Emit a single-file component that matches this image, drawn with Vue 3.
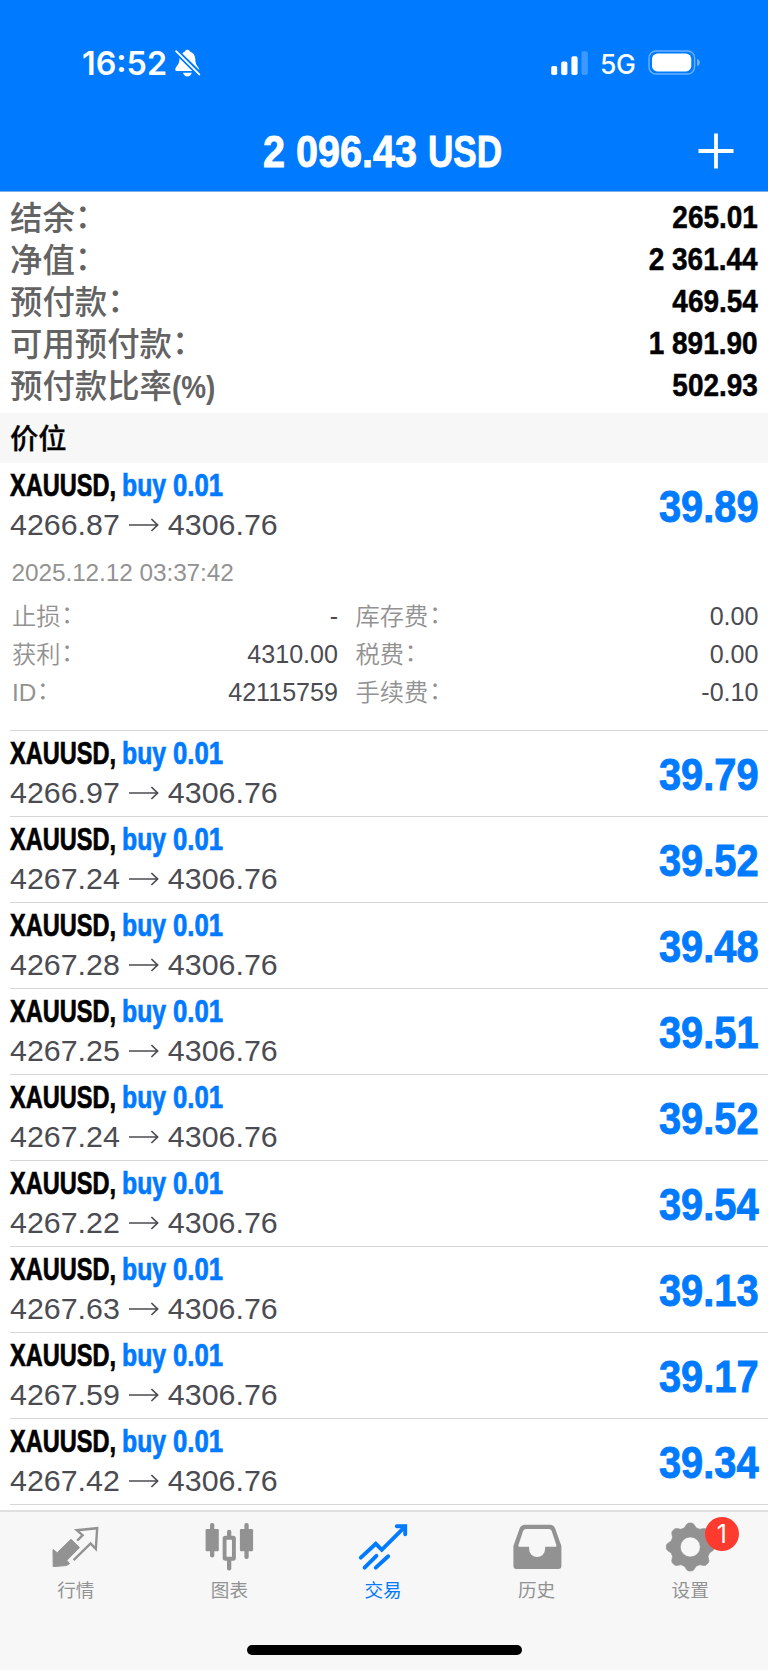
<script setup>
const account = [
  { label: '结余', colon: true, value: '265.01' },
  { label: '净值', colon: true, value: '2 361.44' },
  { label: '预付款', colon: true, value: '469.54' },
  { label: '可用预付款', colon: true, value: '1 891.90' },
  { label: '预付款比率', suffix: '(%)', value: '502.93' },
]

const positions = [
  { open: '4266.87', profit: '39.89', expanded: true },
  { open: '4266.97', profit: '39.79' },
  { open: '4267.24', profit: '39.52' },
  { open: '4267.28', profit: '39.48' },
  { open: '4267.25', profit: '39.51' },
  { open: '4267.24', profit: '39.52' },
  { open: '4267.22', profit: '39.54' },
  { open: '4267.63', profit: '39.13' },
  { open: '4267.59', profit: '39.17' },
  { open: '4267.42', profit: '39.34' },
]

const details = [
  ['止损', '-', '库存费', '0.00'],
  ['获利', '4310.00', '税费', '0.00'],
  ['ID', '42115759', '手续费', '-0.10'],
]

// Eight-toothed gear outline around (cx, cy)
function gear(cx, cy) {
  const profile = [[-17, 20.1], [-9, 23], [-4.5, 24], [4.5, 24], [9, 23], [17, 20.1]]
  const points = []
  for (let t = 0; t < 8; t++) {
    for (const [deg, r] of profile) {
      const a = ((t * 45 + deg) * Math.PI) / 180
      points.push(`${(cx + r * Math.sin(a)).toFixed(2)} ${(cy - r * Math.cos(a)).toFixed(2)}`)
    }
  }
  return `M${points.join('L')}ZM${cx - 10} ${cy}a10 10 0 1 0 20 0a10 10 0 1 0 -20 0Z`
}
const gearPath = gear(49.3, 27)
</script>

<template>
  <div class="screen">
    <header class="header">
      <div class="status">
        <span class="time">16:52</span>
        <svg class="bell" width="27" height="30" viewBox="0 0 27 30">
          <path fill="#fff" d="M8.2 4.6C9 3.6 10 3 11 2.6C11.2 1.2 12.1.8 13.4.8S15.6 1.2 15.9 2.6C19.4 3.8 21.1 6.4 21.3 10.2C21.5 14.6 22.2 15.8 24.2 18.2Q25.2 19.4 25.2 21.1Z" />
          <path fill="#fff" d="M5.7 8.6L19.1 22H3Q1.2 22 1.2 20.4Q1.2 19 2.7 17.3C4.7 15 5.3 13.4 5.5 9.6Z" />
          <path fill="#fff" d="M9 23.8H17.8Q16.7 27.4 13.4 27.4T9 23.8Z" />
          <path stroke="#007aff" stroke-width="5" d="M3 3.2L25 25.2" />
          <path stroke="#fff" stroke-width="1.9" stroke-linecap="round" d="M2.1 2.2L25.3 25.4" />
        </svg>
        <span class="grow"></span>
        <svg class="signal" width="38" height="24" viewBox="0 0 38 24" fill="#fff">
          <rect x=".2" y="15" width="6" height="9" rx="1.8" />
          <rect x="10.2" y="10.6" width="6.2" height="13.4" rx="1.8" />
          <rect x="20.4" y="5.3" width="6.2" height="18.7" rx="1.8" />
          <rect x="30.5" y=".2" width="6.3" height="23.8" rx="1.8" opacity=".24" />
        </svg>
        <span class="net">5G</span>
        <svg class="battery" width="53" height="26" viewBox="0 0 53 26">
          <rect x="1" y="1" width="45.6" height="23" rx="7" fill="none" stroke="#fff" stroke-opacity=".42" stroke-width="1.4" />
          <rect x="4" y="3.6" width="39.3" height="17.8" rx="5.4" fill="#fff" />
          <path d="M49.2 8.7Q51.8 9.8 51.8 12.4T49.2 16Z" fill="#fff" opacity=".48" />
        </svg>
      </div>
      <div class="titlebar">
        <h1 class="title"><span class="title-num">2 096.43</span><span class="title-cur">USD</span></h1>
        <svg class="plus" width="36" height="36" viewBox="0 0 36 36">
          <path stroke="#fff" stroke-width="3.8" d="M.5 18H35.5M18 .5V35.5" />
        </svg>
      </div>
    </header>

    <section class="account">
      <div v-for="a in account" :key="a.label" class="account-row">
        <span class="account-label">{{ a.label }}<span v-if="a.colon" class="colon">：</span><span v-if="a.suffix" class="pct">{{ a.suffix }}</span></span>
        <span class="account-value">{{ a.value }}</span>
      </div>
    </section>

    <h2 class="section">价位</h2>

    <main class="positions">
      <article v-for="(p, i) in positions" :key="i" class="position" :class="{ expanded: p.expanded }">
        <div class="row">
          <div class="info">
            <div class="symbol-line">
              <span class="symbol">XAUUSD,</span><span class="buy">buy</span><span class="volume">0.01</span>
            </div>
            <div class="prices">
              <span>{{ p.open }}</span>
              <svg class="arrow" width="30" height="14" viewBox="0 0 30 14">
                <path d="M0 7H28.6M22.4 1L28.6 7L22.4 13" fill="none" stroke="#4b4b52" stroke-width="1.7" />
              </svg>
              <span>4306.76</span>
            </div>
          </div>
          <span class="profit">{{ p.profit }}</span>
        </div>
        <div v-if="p.expanded" class="details">
          <div class="date">2025.12.12 03:37:42</div>
          <div v-for="d in details" :key="d[0]" class="detail-row">
            <span class="dim">{{ d[0] }}<span class="colon">：</span></span>
            <span class="val">{{ d[1] }}</span>
            <span class="dim">{{ d[2] }}<span class="colon">：</span></span>
            <span class="val">{{ d[3] }}</span>
          </div>
        </div>
      </article>
    </main>

    <nav class="tabs">
      <a class="tab">
        <svg class="icon" width="100" height="54" viewBox="26.8 1520 100 54">
          <path fill="#929292" stroke="#929292" stroke-linejoin="round" d="M52.8 1549.5L57 1552.7L70.8 1539.3L79.3 1547.6L66.7 1560.3L69.3 1563.8L66 1565.6L53 1566.6Z" />
          <path fill="none" stroke="#929292" stroke-width="2.4" d="M77 1540.6L82.4 1535.2L76.6 1530.2L97 1528.2L95.6 1549L90.4 1543.4L73.4 1560.2" />
        </svg>
        <span class="tab-label">行情</span>
      </a>
      <a class="tab">
        <svg class="icon" width="100" height="54" viewBox="180.4 1520 100 54" fill="#929292">
          <rect x="206" y="1529" width="13.2" height="22.3" rx="1.2" />
          <rect x="210.4" y="1523" width="4.3" height="34.6" rx="2" />
          <rect x="240.3" y="1529" width="13.2" height="22.3" rx="1.2" />
          <rect x="244.8" y="1523" width="4.3" height="36" rx="2" />
          <rect x="227.4" y="1529.7" width="4.3" height="8" rx="2" />
          <rect x="227.4" y="1558" width="4.3" height="12.4" rx="2" />
          <rect x="225" y="1537.8" width="9.3" height="21" rx=".8" fill="none" stroke="#929292" stroke-width="3.9" />
        </svg>
        <span class="tab-label">图表</span>
      </a>
      <a class="tab active">
        <svg class="icon" width="100" height="54" viewBox="334 1520 100 54" fill="none" stroke="#007aff" stroke-width="3.9">
          <path stroke-linecap="round" d="M360.8 1557.6L375.8 1543.8L381.8 1549.8L404.8 1526.8M364.6 1567.6L376.4 1555.8M375.8 1567.6L388.2 1556.2" />
          <path stroke-linecap="round" d="M396.8 1526.2H405.2V1534.2" />
          <path fill="#007aff" stroke="none" d="M399 1526H406V1533Z" />
        </svg>
        <span class="tab-label">交易</span>
      </a>
      <a class="tab">
        <svg class="icon" width="100" height="54" viewBox="487.6 1520 100 54">
          <path fill="#929292" fill-rule="evenodd" d="M513 1546L519.3 1528.2Q520.7 1524.7 524.5 1524.7H549.5Q553.3 1524.7 554.7 1528.2L561 1546V1566Q561 1569 558 1569H516Q513 1569 513 1566ZM518 1545.2Q517.8 1546.8 519 1546.8H528.7V1549A8 8 0 0 0 544.7 1549V1546.8H555Q556.2 1546.8 556 1545.2L551.3 1531Q550.5 1529 548.5 1529H525.5Q523.5 1529 522.7 1531Z" />
        </svg>
        <span class="tab-label">历史</span>
      </a>
      <a class="tab">
        <svg class="icon" width="100" height="54" viewBox="0 0 100 54">
          <path fill="#929292" stroke="#929292" stroke-width=".6" stroke-linejoin="round" fill-rule="evenodd" :d="gearPath" />
        </svg>
        <span class="tab-label">设置</span>
        <b class="badge">1</b>
      </a>
    </nav>
    <div class="home"><i class="home-bar"></i></div>
  </div>
</template>

<style>
html, body { margin: 0; background: #fff; }
</style>

<style scoped>
.screen {
  width: 768px;
  height: 1670px;
  overflow: hidden;
  display: flex;
  flex-direction: column;
  background: #fff;
  font-family: "Liberation Sans", "Noto Sans CJK SC", sans-serif;
  color: #000;
}
.header {
  height: 192px;
  flex: none;
  box-sizing: border-box;
  background: #007aff;
  color: #fff;
  border-bottom: 1px solid #7fb0e4;
}
.status {
  display: flex;
  align-items: center;
  height: 44px;
  padding: 40px 67px 0 82px;
  font-family: Inter, sans-serif;
}
.time { font-size: 32.3px; font-weight: 600; line-height: 44px; width: 92px; padding-top: 3px; white-space: nowrap; }
.bell { margin-top: 3px; }
.signal { margin-top: 1px; }
.battery { margin-top: 2px; }
.grow { flex: 1; }
.net { font-size: 26.5px; font-weight: 500; width: 48px; margin-left: 11px; margin-top: 3px; letter-spacing: -.3px; }
.titlebar {
  display: grid;
  grid-template-columns: 1fr auto;
  align-items: center;
  height: 58px;
  margin-top: 37px;
  padding: 0 34px 0 262.5px;
}
.title {
  margin: 0;
  display: flex;
  font-size: 45px;
  line-height: 58px;
  font-weight: 700;
  white-space: nowrap;
  padding-top: 2px;
  -webkit-text-stroke: .9px #fff;
}
.title-num { width: 165px; transform: scaleX(.88); transform-origin: left; }
.title-cur { transform: scaleX(.78); transform-origin: left; }
.plus { margin-top: -1px; }

.account { height: 216px; padding: 5px 10px 0; flex: none; }
.account-row { display: flex; justify-content: space-between; height: 42px; line-height: 42px; }
.account-label { font-size: 32.4px; font-weight: 500; color: #636363; white-space: nowrap; padding-top: 1px; }
.colon { display: inline-block; line-height: 1; transform: translate(0, -2px); }
.pct { display: inline-block; font-size: 31px; font-weight: 700; transform: scaleX(.9); transform-origin: left; }
.account-value {
  font-size: 32px;
  font-weight: 700;
  line-height: 41px;
  transform: scaleX(.874);
  transform-origin: right;
  white-space: nowrap;
  -webkit-text-stroke: .5px #000;
}
.section {
  margin: 0;
  height: 50px;
  flex: none;
  padding-left: 10px;
  background: #f7f7f7;
  font-size: 28.3px;
  line-height: 52px;
  font-weight: 500;
  -webkit-text-stroke: .3px #000;
}
.positions { height: 1047px; flex: none; overflow: hidden; }
.position { height: 85px; margin-left: 10px; border-bottom: 1px solid #d6d6d8; }
.position.expanded { height: 267px; }
.row { display: flex; justify-content: space-between; align-items: center; height: 86px; padding-right: 9.5px; }
.info { height: 86px; }
.symbol-line { height: 43px; line-height: 45px; display: flex; font-size: 31px; font-weight: 700; white-space: nowrap; -webkit-text-stroke: .7px; }
.symbol-line span { transform-origin: left; }
.symbol { width: 112px; transform: scaleX(.76); }
.buy { width: 51px; color: #007aff; transform: scaleX(.8); }
.volume { color: #007aff; transform: scaleX(.83); }
.prices { display: flex; align-items: center; height: 37px; line-height: 37px; font-size: 30.4px; color: #4b4b52; }
.arrow { margin: 0 9px 0 9px; }
.profit {
  font-size: 45px;
  line-height: 86px;
  font-weight: 700;
  color: #007aff;
  transform: translateY(.5px) scaleX(.885);
  transform-origin: right;
  -webkit-text-stroke: .9px #007aff;
}
.details { font-size: 24.4px; }
.date { height: 48px; line-height: 48px; padding-left: 1.5px; color: #929292; letter-spacing: -.08px; }
.detail-row {
  display: grid;
  grid-template-columns: 110px 216px 1fr 110px;
  height: 38px;
  line-height: 39px;
  padding: 0 9.5px 0 2px;
}
.detail-row .dim:nth-child(3) { padding-left: 17.5px; }
.dim { color: #929292; font-weight: 350; font-size: 24.3px; white-space: nowrap; }
.dim .colon { transform: translate(.5px, -2px); }
.val { color: #4b4b52; text-align: right; font-size: 25.1px; }

.tabs {
  flex: none;
  display: grid;
  grid-template-columns: repeat(5, 1fr);
  height: 132px;
  box-sizing: border-box;
  border-top: 2px solid #dfdfdf;
  background: #f7f7f7;
}
.tab {
  position: relative;
  display: flex;
  flex-direction: column;
  align-items: center;
  padding-top: 8px;
  color: #929292;
  font-size: 18.6px;
  line-height: 34px;
}
.tab.active { color: #007aff; }
.tab-label { padding-right: 2px; }
.icon { display: block; }
.badge {
  position: absolute;
  left: 90.5px;
  top: 5px;
  width: 34px;
  height: 34px;
  border-radius: 50%;
  background: #ff3b30;
  color: #fff;
  font-family: Inter, sans-serif;
  font-size: 25px;
  font-weight: 400;
  line-height: 34px;
  text-align: center;
}
.home { flex: 1; background: #f7f7f7; display: flex; justify-content: center; align-items: flex-start; }
.home-bar { width: 275px; height: 10px; border-radius: 5px; background: #000; margin-top: 3px; }
</style>
